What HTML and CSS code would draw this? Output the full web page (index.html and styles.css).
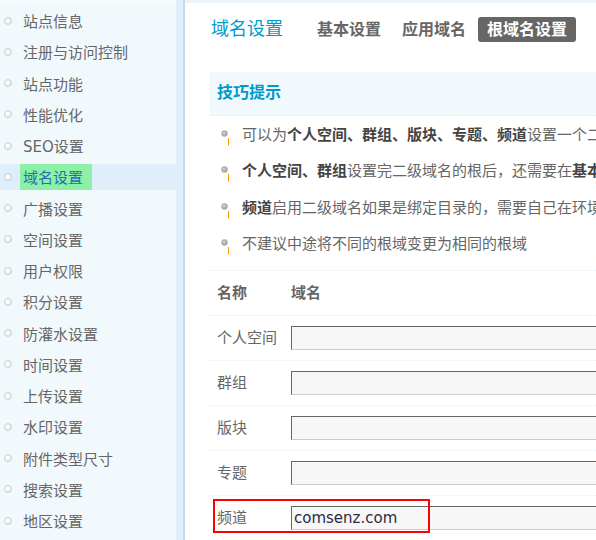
FILE: index.html
```html
<!DOCTYPE html>
<html lang="zh">
<head>
<meta charset="utf-8">
<title>域名设置</title>
<link rel="stylesheet" href="styles.css">
</head>
<body>
<div class="layout">
  <aside class="sidebar">
    <ul class="menu">
      <li><a><i class="dot"></i>站点信息</a></li>
      <li><a><i class="dot"></i>注册与访问控制</a></li>
      <li><a><i class="dot"></i>站点功能</a></li>
      <li><a><i class="dot"></i>性能优化</a></li>
      <li><a><i class="dot"></i>SEO设置</a></li>
      <li class="active"><a><i class="dot"></i><span class="hl">域名设置</span></a></li>
      <li><a><i class="dot"></i>广播设置</a></li>
      <li><a><i class="dot"></i>空间设置</a></li>
      <li><a><i class="dot"></i>用户权限</a></li>
      <li><a><i class="dot"></i>积分设置</a></li>
      <li><a><i class="dot"></i>防灌水设置</a></li>
      <li><a><i class="dot"></i>时间设置</a></li>
      <li><a><i class="dot"></i>上传设置</a></li>
      <li><a><i class="dot"></i>水印设置</a></li>
      <li><a><i class="dot"></i>附件类型尺寸</a></li>
      <li><a><i class="dot"></i>搜索设置</a></li>
      <li><a><i class="dot"></i>地区设置</a></li>
    </ul>
  </aside>
  <div class="divider"></div>
  <main class="main">
    <div class="topband"></div>
    <div class="itemtitle">
      <h3>域名设置</h3>
      <ul class="tabs">
        <li><a>基本设置</a></li>
        <li><a>应用域名</a></li>
        <li class="current"><a>根域名设置</a></li>
      </ul>
    </div>
    <div class="tips">
      <div class="tips-head">技巧提示</div>
      <ul class="tips-list">
        <li><svg class="tip-ico" width="9" height="16" viewBox="0 0 9 16"><circle cx="3.5" cy="3.5" r="3.2" fill="#aaaaaa"/><circle cx="3" cy="3" r="1.4" fill="#cfcfcf"/><line x1="7.5" y1="8" x2="7.5" y2="15.5" stroke="#ff9900" stroke-width="1"/></svg><span class="tip-text">可以为<b>个人空间、群组、版块、专题、频道</b>设置一个二级域名的根</span></li>
        <li><svg class="tip-ico" width="9" height="16" viewBox="0 0 9 16"><circle cx="3.5" cy="3.5" r="3.2" fill="#aaaaaa"/><circle cx="3" cy="3" r="1.4" fill="#cfcfcf"/><line x1="7.5" y1="8" x2="7.5" y2="15.5" stroke="#ff9900" stroke-width="1"/></svg><span class="tip-text"><b>个人空间、群组</b>设置完二级域名的根后，还需要在<b>基本设置</b>中开启</span></li>
        <li><svg class="tip-ico" width="9" height="16" viewBox="0 0 9 16"><circle cx="3.5" cy="3.5" r="3.2" fill="#aaaaaa"/><circle cx="3" cy="3" r="1.4" fill="#cfcfcf"/><line x1="7.5" y1="8" x2="7.5" y2="15.5" stroke="#ff9900" stroke-width="1"/></svg><span class="tip-text"><b>频道</b>启用二级域名如果是绑定目录的，需要自己在环境中配置</span></li>
        <li><svg class="tip-ico" width="9" height="16" viewBox="0 0 9 16"><circle cx="3.5" cy="3.5" r="3.2" fill="#aaaaaa"/><circle cx="3" cy="3" r="1.4" fill="#cfcfcf"/><line x1="7.5" y1="8" x2="7.5" y2="15.5" stroke="#ff9900" stroke-width="1"/></svg><span class="tip-text">不建议中途将不同的根域变更为相同的根域</span></li>
      </ul>
    </div>
    <div class="table">
      <div class="row head"><div class="c1">名称</div><div class="c2 c2-head">域名</div></div>
      <div class="row"><div class="c1">个人空间</div><div class="c2"><div class="input"></div></div></div>
      <div class="row"><div class="c1">群组</div><div class="c2"><div class="input"></div></div></div>
      <div class="row"><div class="c1">版块</div><div class="c2"><div class="input"></div></div></div>
      <div class="row"><div class="c1">专题</div><div class="c2"><div class="input"></div></div></div>
      <div class="row"><div class="c1">频道</div><div class="c2"><div class="input">comsenz.com</div></div></div>
    </div>
    <div class="mark"></div>
  </main>
</div>
</body>
</html>
```
FILE: styles.css
```css
html, body {
  margin: 0;
  padding: 0;
  width: 596px;
  height: 540px;
  overflow: hidden;
  background: #fff;
  font-family: "DejaVu Sans", "Noto Sans CJK SC", sans-serif;
  color: #666;
}
ul { list-style: none; margin: 0; padding: 0; }

.layout {
  display: flex;
  width: 900px;
  height: 540px;
}

/* sidebar */
.sidebar {
  width: 176px;
  flex: none;
  background: #f2f9fd;
  border-top: 3px solid #f8fbfe;
  box-sizing: border-box;
  padding-top: 2px;
}
.menu li {
  height: 31.25px;
  display: flex;
  align-items: center;
}
.menu a {
  display: flex;
  align-items: center;
  width: 100%;
  height: 26px;
  font-size: 15px;
  color: #666;
  padding-left: 4px;
  box-sizing: border-box;
}
.dot {
  width: 8px;
  height: 8px;
  border-radius: 50%;
  box-sizing: border-box;
  border: 1px solid #cfcfcf;
  background: radial-gradient(circle at 45% 45%, #ffffff 35%, #e2e2e2 70%);
  margin-right: 11px;
  flex: none;
}
.menu .active a {
  background: #deeefa;
}
.hl {
  display: flex;
  align-items: center;
  height: 26px;
  margin-left: -3px;
  padding: 0 9px 0 3px;
  background: #8cf0a6;
  color: #1f6fb2;
}

.divider {
  width: 7px;
  flex: none;
  background: #deeefa;
  border-right: 2px solid #c3d9ec;
}

/* main */
.main {
  flex: 1;
  position: relative;
  padding-left: 25px;
}
.topband {
  height: 3px;
  margin-left: -25px;
  background: #eef5fa;
}
.itemtitle {
  display: flex;
  align-items: center;
  height: 52px;
}
.itemtitle h3 {
  margin: 0 0 0 1px;
  font-size: 18px;
  font-weight: normal;
  color: #0099cc;
  width: 97px;
  padding-bottom: 4px;
}
.tabs {
  display: flex;
}
.tabs li {
  margin-right: 3px;
}
.tabs a {
  display: block;
  height: 25px;
  line-height: 25px;
  padding: 0 9px;
  font-size: 16px;
  font-weight: bold;
  color: #666;
  border-radius: 3px;
}
.tabs .current a {
  background: #666;
  color: #fff;
}

.tips {
  margin-top: 17px;
  width: 700px;
}
.tips-head {
  height: 43px;
  line-height: 41px;
  background: #f2f9fd;
  border-bottom: 1px dotted #deeefa;
  padding-left: 7px;
  font-size: 16px;
  font-weight: bold;
  color: #0099cc;
}
.tips-list {
  padding: 1px 0 8px 11px;
  border-bottom: 1px dotted #deeefa;
}
.tips-list li {
  display: flex;
  align-items: center;
  height: 36.25px;
  font-size: 15px;
  white-space: nowrap;
  color: #666;
}
.tip-text {
  padding-bottom: 3px;
}
.tips-list b {
  color: #444;
}
.tip-ico {
  flex: none;
  margin-right: 12px;
  margin-top: 6px;
}

.table {
  width: 700px;
}
.row {
  display: flex;
  align-items: center;
  height: 44px;
  border-bottom: 1px dotted #deeefa;
  font-size: 15px;
  color: #666;
}
.row.head {
  font-weight: bold;
  color: #666;
}
.c1 {
  width: 74px;
  padding-left: 7px;
  padding-bottom: 4px;
  flex: none;
}
.c2-head {
  padding-bottom: 4px;
}
.input {
  width: 420px;
  height: 24px;
  box-sizing: border-box;
  border: 1px solid;
  border-color: #666 #ccc #ccc #666;
  background: #f7f7f7;
  font-family: "DejaVu Sans", sans-serif;
  font-size: 15px;
  line-height: 22px;
  padding-left: 2px;
  color: #2b2b44;
  margin-bottom: 1px;
}

.mark {
  position: absolute;
  left: 28px;
  top: 499px;
  width: 217px;
  height: 34px;
  box-sizing: border-box;
  border: 2px solid #ff0000;
}
```
